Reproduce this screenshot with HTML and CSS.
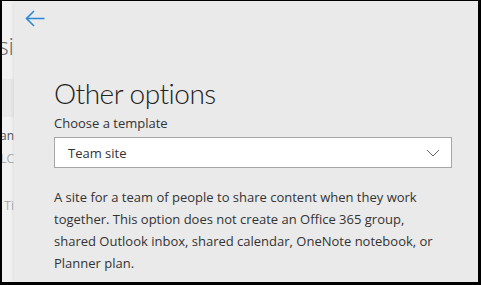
FILE: index.html
```html
<!DOCTYPE html>
<html lang="en">
<head>
    <meta charset="UTF-8">
    <meta name="viewport" content="width=device-width, initial-scale=1.0">
    <title>Other options</title>
    <link rel="stylesheet" href="styles.css">
</head>
<body>
    <div class="frame">
        <div class="behind">
            <div class="peek peek-title"><span>Create a team si</span></div>
            <div class="peek-box"></div>
            <div class="peek peek-small"><span>Site owner an</span></div>
            <div class="peek peek-faint"><span>Site LC</span></div>
            <div class="peek peek-faint peek-low"><span>Ti</span></div>
        </div>
        <div class="panel">
            <button class="back" aria-label="Back">
                <svg width="20" height="17" viewBox="0 0 20 17">
                    <path d="M9 1 L1.5 8.5 L9 16 M1.5 8.5 H19.5" fill="none" stroke="#2b88d8" stroke-width="1.6"/>
                </svg>
            </button>
            <h1>Other options</h1>
            <label class="label">Choose a template</label>
            <div class="select">
                <span>Team site</span>
                <svg width="14" height="8" viewBox="0 0 14 8">
                    <path d="M1 1 L7 7 L13 1" fill="none" stroke="#666" stroke-width="1"/>
                </svg>
            </div>
            <p class="desc">A site for a team of people to share content when they work together. This option does not create an Office 365 group, shared Outlook inbox, shared calendar, OneNote notebook, or Planner plan.</p>
        </div>
    </div>
</body>
</html>
```

FILE: styles.css
```css
body {
    margin: 0;
    background-color: #000;
    font-family: "Open Sans", "Noto Sans", sans-serif;
    color: #333;
}
.frame {
    display: flex;
    height: 281px;
    margin: 1px 3px 3px 2px;
    background-color: #eaeaea;
    overflow: hidden;
}
.behind {
    width: 12px;
    flex-shrink: 0;
    background-color: #f1f1f1;
    overflow: hidden;
    padding-top: 28px;
}
.peek {
    display: flex;
    justify-content: flex-end;
    white-space: nowrap;
}
.peek-title {
    font-size: 24px;
    font-weight: 300;
    color: #666;
    height: 32px;
}
.peek-box {
    height: 38px;
    margin-top: 18px;
    background-color: #e8e8e8;
}
.peek-small {
    font-size: 12px;
    color: #555;
    margin-top: 10px;
}
.peek-faint {
    font-size: 12px;
    color: #aaa;
    margin-top: 6px;
}
.peek-low {
    margin-top: 30px;
}
.panel {
    flex: 1;
    padding: 0 26px 0 40px;
    box-shadow: -1px 0 3px rgba(0,0,0,0.08);
}
.back {
    display: block;
    background: none;
    border: none;
    padding: 0;
    margin: 9px 0 0 -29px;
    height: 17px;
    cursor: pointer;
}
h1 {
    margin: 50px 0 0 0;
    font-family: Lato, "Open Sans", sans-serif;
    font-size: 28px;
    font-weight: 300;
    line-height: 32px;
    letter-spacing: -0.5px;
    color: #222;
}
.label {
    display: block;
    margin-top: 5px;
    font-size: 13px;
    line-height: 18px;
    color: #333;
}
.select {
    display: flex;
    justify-content: space-between;
    align-items: center;
    height: 29px;
    margin-top: 5px;
    padding: 0 11px 0 13px;
    background-color: #fff;
    border: 1px solid #a6a6a6;
    font-size: 13px;
    color: #333;
}
.desc {
    max-width: 386px;
    margin: 18px 0 0 0;
    font-size: 13px;
    line-height: 22px;
    color: #333;
}
```
